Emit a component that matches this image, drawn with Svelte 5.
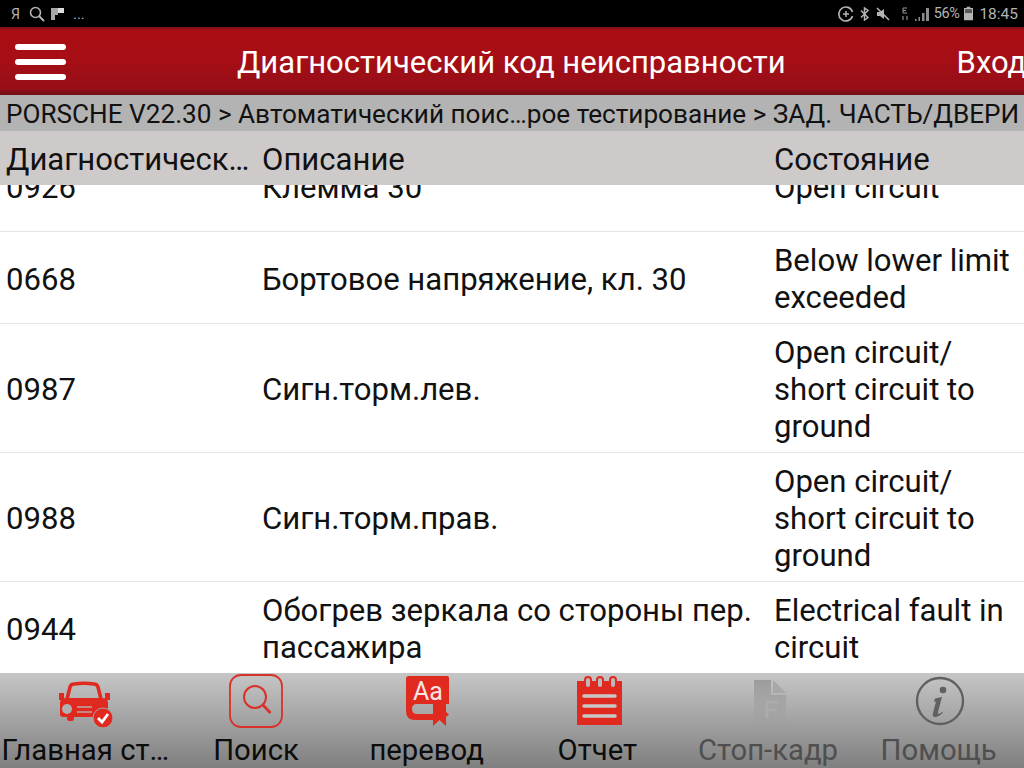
<script>
  const rows = [
    { code: '0926', desc: 'Клемма 30', state: ['Open circuit'] },
    { code: '0668', desc: 'Бортовое напряжение, кл. 30', state: ['Below lower limit', 'exceeded'] },
    { code: '0987', desc: 'Сигн.торм.лев.', state: ['Open circuit/', 'short circuit to', 'ground'] },
    { code: '0988', desc: 'Сигн.торм.прав.', state: ['Open circuit/', 'short circuit to', 'ground'] },
    { code: '0944', desc: 'Обогрев зеркала со стороны пер. пассажира', state: ['Electrical fault in', 'circuit'] }
  ];
</script>

<div class="screen">
  <div class="status">
    <div class="status-left">
      <span class="ya">Я</span>
      <svg width="16" height="16" viewBox="0 0 16 16"><circle cx="6.5" cy="6.5" r="5" fill="none" stroke="#b4b4b4" stroke-width="1.6" /><path d="M10 10l5 5" stroke="#b4b4b4" stroke-width="2" /></svg>
      <svg width="13" height="12" viewBox="0 0 13 12"><path d="M0 0h13v5H7v2H4v5H0z" fill="#a8a8a8" /><path d="M7 0h6v5H7z" fill="#dcdcdc" /></svg>
      <span class="dots">...</span>
    </div>
    <div class="status-right">
      <svg width="16" height="16" viewBox="0 0 16 16"><path d="M14.5 10A7 7 0 1 1 14.5 6" fill="none" stroke="#b4b4b4" stroke-width="1.6" /><path d="M5 8h6M8 5v6" stroke="#b4b4b4" stroke-width="1.5" /></svg>
      <svg class="bt" width="9" height="14" viewBox="0 0 9 14"><path d="M1 3.500l7 7L4.500 13V1L8 3.500l-7 7" fill="none" stroke="#b4b4b4" stroke-width="1.5" /></svg>
      <svg class="mute" width="14" height="14" viewBox="0 0 14 14"><path d="M1 5h3l4-3v10L4 9H1z" fill="#b4b4b4" /><path d="M1 1l12 12" stroke="#b4b4b4" stroke-width="1.6" /></svg>
      <svg class="net" width="8" height="14" viewBox="0 0 8 14"><path d="M2 1h4M2 1v5M2 3.500h3M2 6h4" stroke="#9a9a9a" stroke-width="1" fill="none" /><path d="M2 9v4M6 9v4" stroke="#777" stroke-width="1.400" /></svg>
      <svg class="signal" width="14" height="14" viewBox="0 0 14 14"><path d="M0 14h1.500v-2H0zM3.500 14H5v-4H3.500z" fill="#8a8a8a" /><path d="M7 14h2.500V6H7zM11 14h3V1h-3z" fill="#8e8e8e" /></svg>
      <span class="pct">56%</span>
      <svg class="batt" width="9" height="15" viewBox="0 0 10 15"><path d="M3 0h4v1.500h3V15H0V1.500h3z" fill="#b4b4b4" /><path d="M1.200 2.700h7.600V7H1.200z" fill="#555" /></svg>
      <span class="clock">18:45</span>
    </div>
  </div>

  <header class="topbar">
    <button class="menu" aria-label="Меню"><i></i><i></i><i></i></button>
    <h1>Диагностический код неисправности</h1>
    <span class="login">Вход</span>
  </header>

  <div class="crumbs">PORSCHE V22.30 &gt; Автоматический поис…рое тестирование &gt; ЗАД. ЧАСТЬ/ДВЕРИ</div>

  <div class="row head">
    <div class="code">Диагностическ…</div>
    <div class="desc">Описание</div>
    <div class="state">Состояние</div>
  </div>

  <div class="list">
    <div class="list-inner">
      {#each rows as r}
        <div class="row item">
          <div class="code">{r.code}</div>
          <div class="desc">{r.desc}</div>
          <div class="state">
            {#each r.state as line}
              <div>{line}</div>
            {/each}
          </div>
        </div>
      {/each}
    </div>
  </div>

  <nav class="tabs">
    <div class="tab">
      <svg width="58" height="58" viewBox="0 0 58 58">
        <!-- roof and windshield -->
        <path d="M11 25l3-12q1-3 4-3 10-1.500 20 0 3 0 4 3l3 12" fill="none" stroke="#e0291f" stroke-width="3.500" />
        <path d="M3 19h5v7H3zM49 19h5v7h-5z" fill="#e0291f" />
        <path d="M4 29q0-5 6-5h36q6 0 6 5v11q0 3-3 3h-4v2q0 2-2 2h-3q-2 0-2-2v-2H18v2q0 2-2 2h-3q-2 0-2-2v-2H7q-3 0-3-3z" fill="#e0291f" />
        <circle cx="11" cy="35" r="5" fill="#b0b0b0" />
        <path d="M21 33h15M21 38h15" stroke="#b9a9a9" stroke-width="1.500" />
        <circle cx="47" cy="44" r="10" fill="#e0291f" stroke="#a6a6a6" stroke-width="1" />
        <path d="M42 44l4 4 6-8" fill="none" stroke="#fff" stroke-width="2.800" />
      </svg>
      <span>Главная ст…</span>
    </div>
    <div class="tab">
      <svg width="58" height="56" viewBox="0 0 58 56">
        <rect x="3" y="1" width="52" height="52" rx="11" fill="none" stroke="#d8312a" stroke-width="1.800" />
        <circle cx="28" cy="23" r="11" fill="none" stroke="#d8312a" stroke-width="2" />
        <path d="M36 31l7.500 8" stroke="#d8312a" stroke-width="2.800" />
      </svg>
      <span>Поиск</span>
    </div>
    <div class="tab">
      <svg width="48" height="54" viewBox="0 0 48 54">
        <path d="M3 5q0-3 3-3h38q2 0 2 2v26H14q-5 0-5 5t5 5h18v6H12q-9 0-9-9z" fill="#e0291f" />
        <path d="M30 30h13v22l-6.500-6-6.500 6z" fill="#e0291f" />
        <path d="M43 38l3 2.500-3 2.500z" fill="#e0291f" />
        <text x="25" y="26" text-anchor="middle" class="aa">Aa</text>
      </svg>
      <span>перевод</span>
    </div>
    <div class="tab">
      <svg width="50" height="54" viewBox="0 0 50 54">
        <path d="M5 7h45v44H5z" fill="#e0291f" />
        <g fill="#b9b9b9" stroke="#e0291f" stroke-width="2">
          <rect x="13" y="3" width="6" height="11" rx="3" />
          <rect x="25" y="3" width="6" height="11" rx="3" />
          <rect x="38" y="3" width="6" height="11" rx="3" />
        </g>
        <path d="M12 22h31M12 32h31M12 42h31" stroke="#c8c8c8" stroke-width="3.500" stroke-linecap="round" />
      </svg>
      <span>Отчет</span>
    </div>
    <div class="tab off">
      <svg width="48" height="50" viewBox="0 0 48 50">
        <defs>
          <linearGradient id="fade" x1="0" y1="0" x2="0" y2="1">
            <stop offset="0" stop-color="#9c9c9c" />
            <stop offset="1" stop-color="#9c9c9c" stop-opacity="0.200" />
          </linearGradient>
        </defs>
        <path d="M10 6h17v15h15v27H10z" fill="url(#fade)" />
        <path d="M29 6l13 13H29z" fill="#a8a8a8" />
        <path d="M23 44V28h12M23 36h10" fill="none" stroke="#b0b0b0" stroke-opacity="0.600" stroke-width="3" />
      </svg>
      <span>Стоп-кадр</span>
    </div>
    <div class="tab off">
      <svg width="54" height="54" viewBox="0 0 54 54">
        <circle cx="28" cy="27" r="23" fill="none" stroke="#606060" stroke-width="2.400" />
        <circle cx="31" cy="16" r="3.300" fill="#606060" />
        <path d="M23 24.500l7-1.500-4 15q-.5 2.500 1 2l4-2.500-.5 1.500q-4 4-7.500 4-3 0-2-4l3-11.500-2 .5z" fill="#606060" />
      </svg>
      <span>Помощь</span>
    </div>
  </nav>
</div>

<style>
  :global(body) {
    margin: 0;
    background: #fff;
  }

  .screen {
    width: 1024px;
    height: 768px;
    display: flex;
    flex-direction: column;
    overflow: hidden;
    font-family: Roboto, "Noto Sans", sans-serif;
    color: #111;
  }

  .status {
    flex: 0 0 27px;
    background: #000;
    color: #b4b4b4;
    display: flex;
    align-items: center;
    justify-content: space-between;
    padding: 0 6px 0 11px;
    font-size: 15px;
  }

  .status-left,
  .status-right {
    display: flex;
    align-items: center;
  }

  .status-left {
    gap: 6px;
  }

  .ya {
    font-size: 14px;
    margin-right: 3px;
  }

  .dots {
    margin-left: 3px;
  }

  .bt {
    margin-left: 6px;
  }

  .mute {
    margin-left: 7px;
  }

  .net {
    margin-left: 11px;
  }

  .signal {
    margin-left: 6px;
  }

  .pct {
    margin-left: 5px;
    font-size: 14.500px;
    letter-spacing: -0.4px;
  }

  .batt {
    margin-left: 5px;
  }

  .clock {
    margin-left: 6px;
    font-size: 15.500px;
  }

  .topbar {
    flex: 0 0 68px;
    box-sizing: border-box;
    padding-top: 2px;
    display: flex;
    align-items: center;
    background: linear-gradient(#7c0f14 0, #ab0d14 4px, #a70e15 30px, #960e18 62px, #6d0f14 68px);
    color: #fff;
    white-space: nowrap;
  }

  .menu {
    border: 0;
    padding: 0;
    margin: 0 0 0 15px;
    background: none;
    width: 51px;
    flex: none;
    display: flex;
    flex-direction: column;
    gap: 9px;
  }

  .menu i {
    display: block;
    height: 6px;
    background: #fff;
    border-radius: 3px;
  }

  h1 {
    margin: 0 0 0 171px;
    font-size: 31.050px;
    font-weight: 400;
  }

  .login {
    margin-left: 171px;
    font-size: 31px;
  }

  .crumbs {
    flex: 0 0 36px;
    background: #b3b3b3;
    padding: 0 0 0 6px;
    line-height: 38px;
    font-size: 26.150px;
    white-space: nowrap;
    overflow: hidden;
  }

  .row {
    display: grid;
    grid-template-columns: 256px 512px 1fr;
    align-items: center;
    padding: 0 6px;
    font-size: 31.100px;
    line-height: 37px;
  }

  .head {
    flex: 0 0 54px;
    height: 54px;
    box-sizing: border-box;
    background: #cfcaca;
    position: relative;
    white-space: nowrap;
    padding-top: 2px;
  }

  .list {
    flex: 1;
    min-height: 0;
    overflow: hidden;
    background: #fff;
  }

  .list-inner {
    margin-top: -45px;
  }

  .item {
    box-sizing: border-box;
    min-height: 92px;
    padding-top: 10px;
    padding-bottom: 7px;
    border-bottom: 1px solid #e4e4e4;
  }

  .item .desc {
    padding-right: 8px;
  }

  .tabs {
    flex: 0 0 95px;
    display: grid;
    grid-template-columns: repeat(6, 1fr);
    background: linear-gradient(#c6c6c6, #7f7f7f);
  }

  .tab {
    display: flex;
    flex-direction: column;
    align-items: center;
    height: 95px;
    overflow: hidden;
    position: relative;
    font-size: 29.300px;
    color: #0c0c0c;
    white-space: nowrap;
  }

  .tab svg {
    position: absolute;
    left: 50%;
    top: 1px;
    transform: translateX(-50%);
  }

  .tab span {
    margin-top: 59px;
    line-height: 36px;
  }

  .tab.off {
    color: #4f4f4f;
  }

  .aa {
    font-family: Roboto, sans-serif;
    font-size: 25px;
    fill: #f7e5e5;
  }
</style>
